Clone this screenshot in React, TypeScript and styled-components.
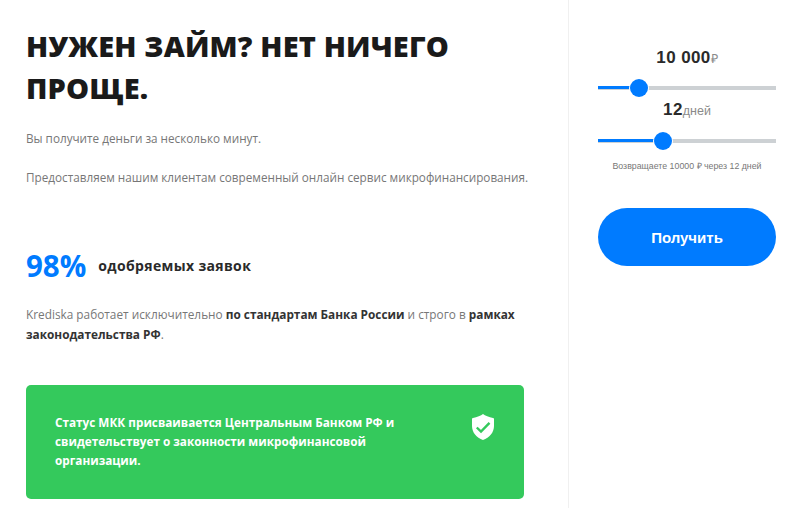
import React from "react";
import styled, { createGlobalStyle } from "styled-components";

const GlobalStyle = createGlobalStyle`
  html, body {
    margin: 0;
    padding: 0;
    background: #fff;
    overflow: hidden;
  }
  * {
    box-sizing: border-box;
  }
`;

const Page = styled.div`
  display: flex;
  width: 800px;
  height: 508px;
  overflow: hidden;
  font-family: "Open Sans", sans-serif;
`;

const Main = styled.main`
  width: 569px;
  height: 100%;
  padding: 25px 15px 0 26px;
  border-right: 1px solid #f0f0f0;
`;

const Title = styled.h1`
  margin: 0 0 20px;
  font-size: 29px;
  line-height: 42px;
  font-weight: 800;
  color: #1a1a1a;
  letter-spacing: 0.15px;
`;

const Lead = styled.p`
  margin: 0 0 20px;
  font-size: 11.72px;
  line-height: 19px;
  color: #777;
`;

const Stat = styled.div`
  display: flex;
  align-items: center;
  gap: 12px;
  margin-top: 58px;
`;

const StatValue = styled.span`
  font-size: 29.5px;
  line-height: 42px;
  font-weight: 700;
  color: #007bff;
`;

const StatLabel = styled.span`
  margin-bottom: 1px;
  font-size: 14px;
  font-weight: 700;
  color: #2a2a2a;
  letter-spacing: 0.35px;
`;

const Note = styled.p`
  max-width: 498px;
  margin: 17px 0 0;
  font-size: 11.82px;
  line-height: 20px;
  color: #777;

  b {
    font-weight: 700;
    color: #333;
  }
`;

const Notice = styled.div`
  display: flex;
  align-items: flex-start;
  justify-content: space-between;
  width: 498px;
  height: 114px;
  margin-top: 41px;
  padding: 28px 29px 0 29px;
  border-radius: 5px;
  background: #34c95c;
`;

const NoticeText = styled.p`
  width: 365px;
  margin: 0;
  font-size: 11.75px;
  line-height: 19px;
  font-weight: 700;
  color: #fff;
`;

const ShieldIcon = styled.svg`
  flex: none;
  width: 24px;
  height: 28px;
`;

const Side = styled.aside`
  flex: 1;
  padding: 46px 24px 0 29px;
  font-family: "Liberation Sans", Arial, sans-serif;
`;

const Amount = styled.div<{ $top: number }>`
  display: flex;
  align-items: baseline;
  justify-content: center;
  height: 24px;
  margin-top: ${(p) => p.$top}px;
  font-size: 17px;
  line-height: 24px;
  font-weight: 700;
  color: #2a2a2a;
  letter-spacing: 0.4px;
`;

const Unit = styled.span`
  font-size: 12.5px;
  font-weight: 400;
  color: #8a8a8a;
  letter-spacing: 0;
`;

const SliderBox = styled.div<{ $gap: number }>`
  position: relative;
  height: 4px;
  margin: ${(p) => p.$gap}px 0 0;
  background: #cdd1d4;
`;

const SliderFill = styled.div`
  height: 3px;
  background: #007bff;
`;

const SliderThumb = styled.div`
  position: absolute;
  top: -7px;
  width: 18px;
  height: 18px;
  margin-left: -9px;
  border-radius: 50%;
  background: #007bff;
  box-shadow: 0 0 0 1px #fff;
`;

const Summary = styled.div`
  margin-top: 17px;
  font-size: 8.8px;
  line-height: 12px;
  text-align: center;
  color: #777;
`;

const Submit = styled.button`
  display: block;
  width: 100%;
  height: 58px;
  margin-top: 36px;
  border: 0;
  border-radius: 29px;
  background: #007bff;
  color: #fff;
  font-family: "Liberation Sans", Arial, sans-serif;
  font-size: 15px;
  font-weight: 700;
  cursor: pointer;
`;

const Slider = ({ percent, gap }: { percent: number; gap: number }) => (
  <SliderBox $gap={gap}>
    <SliderFill style={{ width: `${percent}%` }} />
    <SliderThumb style={{ left: `${percent}%` }} />
  </SliderBox>
);

const App = () => (
  <Page>
    <GlobalStyle />
    <Main>
      <Title>
        НУЖЕН ЗАЙМ? НЕТ НИЧЕГО
        <br />
        ПРОЩЕ.
      </Title>
      <Lead>Вы получите деньги за несколько минут.</Lead>
      <Lead>Предоставляем нашим клиентам современный онлайн сервис микрофинансирования.</Lead>
      <Stat>
        <StatValue>98%</StatValue>
        <StatLabel>одобряемых заявок</StatLabel>
      </Stat>
      <Note>
        Krediska работает исключительно <b>по стандартам Банка России</b> и строго в{" "}
        <b>рамках законодательства РФ</b>.
      </Note>
      <Notice>
        <NoticeText>
          Статус МКК присваивается Центральным Банком РФ и свидетельствует о законности
          микрофинансовой организации.
        </NoticeText>
        <ShieldIcon viewBox="0 0 24 28">
          <path
            fill="#fff"
            d="M12 1 C14 2.6 18 4.4 22 5 C22.7 5.1 23 5.5 23 6 V13 C23 19.5 18.5 24.5 12 27 C5.5 24.5 1 19.5 1 13 V6 C1 5.5 1.3 5.1 2 5 C6 4.4 10 2.6 12 1 Z"
          />
          <path
            fill="none"
            stroke="#34c95c"
            strokeWidth="2.4"
            d="M5.8 14.5 L10 18.5 L18.5 9.8"
          />
        </ShieldIcon>
      </Notice>
    </Main>
    <Side>
      <Amount $top={0}>
        10 000<Unit>₽</Unit>
      </Amount>
      <Slider percent={23.2} gap={16} />
      <Amount $top={8}>
        12<Unit>дней</Unit>
      </Amount>
      <Slider percent={36.3} gap={17} />
      <Summary>Возвращаете 10000 ₽ через 12 дней</Summary>
      <Submit>Получить</Submit>
    </Side>
  </Page>
);

export default App;
